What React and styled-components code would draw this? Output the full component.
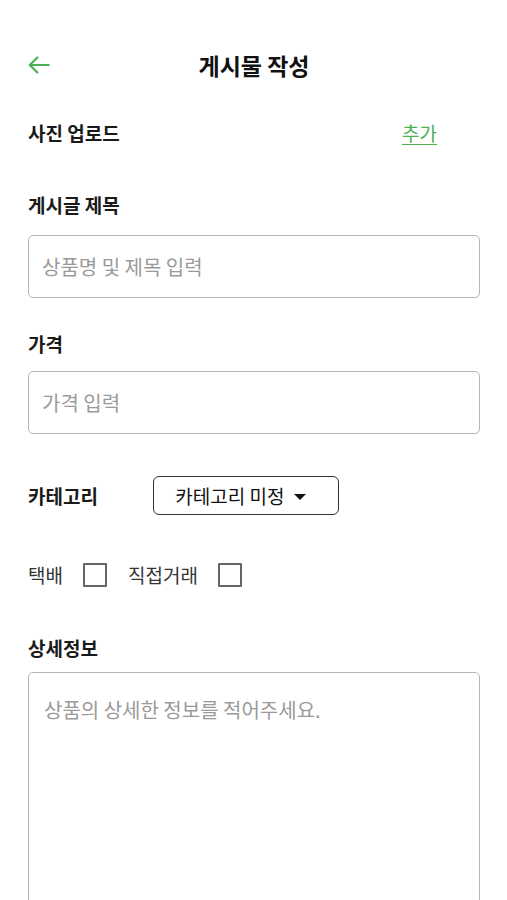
import React, { useState } from 'react'
import styled, { createGlobalStyle } from 'styled-components'

const GlobalStyle = createGlobalStyle`
  body {
    margin: 0;
    background: #fff;
    font-family: "Noto Sans CJK KR", "Noto Sans", sans-serif;
    color: #111;
  }
`;

function BackArrow() {
    return (
        <svg width="26" height="26" viewBox="0 0 24 24">
            <path d="M21 12H4M10.5 5L3.5 12L10.5 19" fill="none" stroke="#4caf50" strokeWidth="2" strokeLinecap="round" strokeLinejoin="round" />
        </svg>
    )
}

function App() {
    const [parcel, setParcel] = useState(false)
    const [direct, setDirect] = useState(false)

    return (
        <Page>
            <GlobalStyle />
            <Header>
                <BackButton><BackArrow /></BackButton>
                <Title>게시물 작성</Title>
            </Header>

            <PhotoRow>
                <Label>사진 업로드</Label>
                <AddLink>추가</AddLink>
            </PhotoRow>

            <Section top={48}>
                <Label>게시글 제목</Label>
                <TextInput placeholder="상품명 및 제목 입력" />
            </Section>

            <Section top={34}>
                <Label>가격</Label>
                <TextInput placeholder="가격 입력" gap={15} />
            </Section>

            <CategoryRow>
                <Label>카테고리</Label>
                <SelectButton>
                    카테고리 미정
                    <Caret />
                </SelectButton>
            </CategoryRow>

            <CheckRow>
                <CheckLabel>택배</CheckLabel>
                <CheckBox checked={parcel} onClick={() => setParcel(!parcel)} />
                <CheckLabel>직접거래</CheckLabel>
                <CheckBox checked={direct} onClick={() => setDirect(!direct)} />
            </CheckRow>

            <Section top={49}>
                <Label>상세정보</Label>
                <TextArea placeholder="상품의 상세한 정보를 적어주세요." />
            </Section>
        </Page>
    )
}

export default App

const Page = styled.div`
    width:507px;
    height:900px;
    overflow:hidden;
    padding:0 27px 0 28px;
    box-sizing:border-box;
`;

const Header = styled.div`
    position:relative;
    height:52px;
    margin-top:39px;
    display:flex;
    align-items:center;
    justify-content:center;
`;

const BackButton = styled.div`
    position:absolute;
    left:-2px;
    top:13px;
    display:flex;
`;

const Title = styled.div`
    font-size:23px;
    font-weight:700;
`;

const PhotoRow = styled.div`
    margin-top:30px;
    display:flex;
    align-items:center;
    justify-content:space-between;
    padding-right:43px;
`;

const Label = styled.div`
    font-size:19px;
    font-weight:700;
    line-height:24px;
    color:#1a1a1a;
`;

const AddLink = styled.a`
    font-size:19px;
    line-height:24px;
    color:#4caf50;
    text-decoration:underline;
    text-underline-offset:3px;
`;

const Section = styled.div`
    margin-top:${({ top }) => top}px;
    display:flex;
    flex-direction:column;
`;

const TextInput = styled.input`
    margin-top:${({ gap }) => gap || 18}px;
    height:63px;
    box-sizing:border-box;
    border:1.5px solid #b5b5b5;
    border-radius:5px;
    padding:0 13px;
    font-family:inherit;
    font-size:20px;
    outline:none;
    &::placeholder { color:#9a9a9a; }
`;

const CategoryRow = styled.div`
    margin-top:42px;
    display:flex;
    align-items:center;
    gap:55px;
`;

const SelectButton = styled.div`
    width:186px;
    height:39px;
    box-sizing:border-box;
    border:1.5px solid #333;
    border-radius:6px;
    display:flex;
    align-items:center;
    justify-content:center;
    gap:10px;
    font-size:19px;
    padding-right:10px;
`;

const Caret = styled.span`
    width:0;
    height:0;
    border-left:6px solid transparent;
    border-right:6px solid transparent;
    border-top:6px solid #111;
    margin-top:2px;
`;

const CheckRow = styled.div`
    margin-top:48px;
    display:flex;
    align-items:center;
`;

const CheckLabel = styled.span`
    font-size:19px;
    line-height:24px;
    color:#333;
    margin-right:20px;
`;

const CheckBox = styled.div`
    width:24px;
    height:24px;
    box-sizing:border-box;
    border:2.5px solid #666;
    border-radius:1px;
    margin-right:21px;
    background:${({ checked }) => checked ? '#4caf50' : '#fff'};
`;

const TextArea = styled.textarea`
    margin-top:12px;
    height:280px;
    box-sizing:border-box;
    border:1.5px solid #b5b5b5;
    border-radius:5px;
    padding:23px 15px;
    font-family:inherit;
    font-size:20px;
    line-height:28px;
    resize:none;
    outline:none;
    &::placeholder { color:#9a9a9a; }
`;
